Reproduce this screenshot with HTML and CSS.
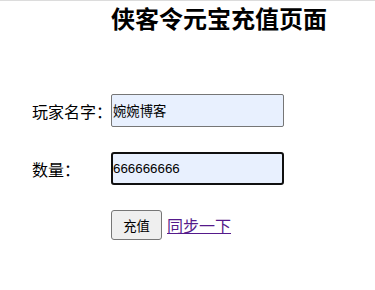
FILE: index.html
```html
<!DOCTYPE html>
<html lang="zh">
<head>
<meta charset="utf-8">
<title>侠客令元宝充值页面</title>
<link rel="stylesheet" href="styles.css">
</head>
<body>
<div class="page">
  <h2 class="title">侠客令元宝充值页面</h2>
  <form class="form">
    <div class="row">
      <label class="label">玩家名字：</label>
      <input class="field" type="text" value="婉婉博客">
    </div>
    <div class="row">
      <label class="label">数量：</label>
      <input class="field field-focus" type="text" value="666666666">
    </div>
    <div class="row actions">
      <button class="btn" type="button">充值</button>
      <a class="link" href="#">同步一下</a>
    </div>
  </form>
</div>
</body>
</html>
```
FILE: styles.css
```css
html, body {
  margin: 0;
  padding: 0;
  background: #fff;
}
body {
  font-family: "Liberation Sans", "Noto Sans CJK SC", sans-serif;
  color: #000;
}
.page {
  border-top: 1px solid #dcdcdc;
  display: flex;
  flex-direction: column;
}
.title {
  margin: 0;
  padding-left: 111px;
  font-size: 24px;
  line-height: 34px;
  font-weight: bold;
  font-family: "Noto Sans CJK SC", sans-serif;
}
.form {
  margin: 59px 0 0 32px;
  display: flex;
  flex-direction: column;
  gap: 25px;
}
.row {
  display: flex;
  align-items: center;
}
.label {
  width: 79px;
  flex-shrink: 0;
  white-space: nowrap;
  font-size: 16px;
  font-family: "Noto Sans CJK SC", sans-serif;
  line-height: 20px;
}
.field {
  box-sizing: border-box;
  width: 173px;
  height: 33px;
  margin: 0;
  padding: 1px 1px;
  border: 1px solid #767676;
  border-radius: 2px;
  background: #e8f0fe;
  font-family: "Liberation Sans", "Noto Sans CJK SC", sans-serif;
  font-size: 13.33px;
  color: #000;
  outline: none;
}
.field-focus {
  border: 2px solid #101010;
  border-radius: 3px;
  padding: 1px 0;
}
.actions {
  padding-left: 79px;
  gap: 5px;
}
.btn {
  box-sizing: border-box;
  width: 51px;
  height: 30px;
  margin: 0;
  padding: 0;
  border: 1px solid #767676;
  border-radius: 3px;
  background: #efefef;
  font-family: "Noto Sans CJK SC", sans-serif;
  font-size: 13.33px;
  color: #000;
}
.link {
  font-size: 16px;
  color: #551a8b;
  text-decoration: underline;
  font-family: "Noto Sans CJK SC", sans-serif;
}
```
